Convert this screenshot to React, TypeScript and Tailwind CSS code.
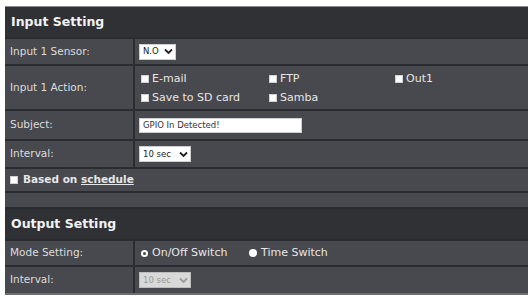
import React from "react";

const font = { fontFamily: '"DejaVu Sans", Verdana, sans-serif' };

function Box() {
  return <span className="inline-block w-[8px] h-[8px] shrink-0 bg-white border border-[#d0d0d0]" />;
}

function Select({ value, disabled = false, width }: { value: string; disabled?: boolean; width: string }) {
  return (
    <div
      className={`${width} h-[16px] flex items-center justify-between pl-[3px] pr-[2px] border ${
        disabled ? "bg-[#d9d9d9] border-[#bdbdbd] text-[#9a9a9a]" : "bg-white border-[#cfcfcf] text-[#222]"
      } text-[8.5px]`}
    >
      <span>{value}</span>
      <svg width="9" height="7" viewBox="0 0 9 7">
        <path d="M1 1.5 L4.5 5 L8 1.5" fill="none" stroke={disabled ? "#9a9a9a" : "#222"} strokeWidth="1.8" />
      </svg>
    </div>
  );
}

function Row({ label, h, children }: { label: string; h: string; children: React.ReactNode }) {
  return (
    <div className={`flex ${h} border-t-2 border-[#2b2c30]`}>
      <div className="w-[130px] shrink-0 flex items-center pl-[5px] border-r-2 border-[#2b2c30] text-[10.5px] text-[#dcdcdc]">
        {label}
      </div>
      <div className="flex-1 flex items-center pl-[4px]">{children}</div>
    </div>
  );
}

function Header({ title }: { title: string }) {
  return (
    <div className="h-[30px] bg-[#303135] flex items-center pl-[6px] pt-[1px] text-[12.5px] font-bold text-[#f2f2f2]">
      {title}
    </div>
  );
}

export default function App() {
  return (
    <div className="w-[528px] h-[298px] bg-white pt-[6px] pl-[5px] overflow-hidden" style={font}>
      <div className="bg-[#48494e] border-t border-[#8a8a8e] border-b-2 border-b-[#6c6d72]">
        <Header title="Input Setting" />
        <Row label="Input 1 Sensor:" h="h-[27px]">
          <Select value="N.O" width="w-[37px]" />
        </Row>
        <Row label="Input 1 Action:" h="h-[45px]">
          <div className="grid grid-cols-[128px_126px_100px] gap-y-[5px] pl-[2px] pt-[2px] text-[11px] leading-[14px] text-[#e6e6e6]">
            <label className="flex items-center gap-[3px]"><Box />E-mail</label>
            <label className="flex items-center gap-[3px]"><Box />FTP</label>
            <label className="flex items-center gap-[3px]"><Box />Out1</label>
            <label className="flex items-center gap-[3px]"><Box />Save to SD card</label>
            <label className="flex items-center gap-[3px]"><Box />Samba</label>
          </div>
        </Row>
        <Row label="Subject:" h="h-[30px]">
          <div className="w-[163px] h-[15px] bg-white border border-[#cfcfcf] flex items-center pl-[3px] text-[8.5px] text-[#333]">
            GPIO In Detected!
          </div>
        </Row>
        <Row label="Interval:" h="h-[28px]">
          <Select value="10 sec" width="w-[52px]" />
        </Row>
        <div className="h-[24px] border-t-2 border-[#2b2c30] flex items-center pl-[5px] gap-[5px] text-[10.5px] font-bold text-[#e6e6e6]">
          <Box />
          <span>
            Based on <span className="underline">schedule</span>
          </span>
        </div>
        <div className="h-[16px] border-t-2 border-[#2b2c30]" />
        <div className="border-t-2 border-[#2b2c30]">
          <Header title="Output Setting" />
        </div>
        <Row label="Mode Setting:" h="h-[26px]">
          <div className="flex items-center text-[11px] text-[#e6e6e6]">
            <label className="flex items-center gap-[4px] w-[110px] pl-[2px]">
              <span className="w-[7px] h-[7px] rounded-full bg-white flex items-center justify-center">
                <span className="w-[3px] h-[3px] rounded-full bg-[#48494e]" />
              </span>
              On/Off Switch
            </label>
            <label className="flex items-center gap-[4px]">
              <span className="w-[8px] h-[8px] rounded-full bg-white" />
              Time Switch
            </label>
          </div>
        </Row>
        <Row label="Interval:" h="h-[28px]">
          <Select value="10 sec" width="w-[52px]" disabled />
        </Row>
      </div>
    </div>
  );
}
